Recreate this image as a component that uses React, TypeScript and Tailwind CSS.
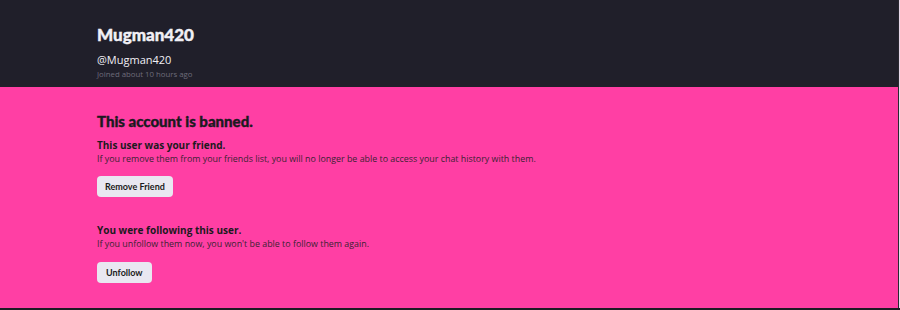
export default function App() {
  return (
    <div className="w-[900px] h-[310px] overflow-hidden flex flex-col bg-[#ff3fa4]" style={{ fontFamily: "Lato, 'Noto Sans', sans-serif" }}>
      <div className="flex flex-1 min-h-0">
        <div className="flex-1 flex flex-col min-w-0">
          <div className="h-[87px] bg-[#201f2a] pl-[97px] pt-[24px] shrink-0">
            <div className="text-[17px] leading-[22px] font-black text-[#f1f0f5] [-webkit-text-stroke:0.4px_#f1f0f5]">Mugman420</div>
            <div className="mt-[7px] text-[11px] leading-[14px] text-[#f1f0f5] font-['Open_Sans',sans-serif]">@Mugman420</div>
            <div className="mt-[1px] text-[7.8px] leading-[12px] text-[#6e6c7a] font-['Open_Sans',sans-serif]">Joined about 10 hours ago</div>
          </div>
          <div className="flex-1 pl-[97px] pt-[24px] text-[#1b1a20]">
            <div className="text-[15px] leading-[20px] font-black [-webkit-text-stroke:0.35px_#1b1a20]">This account is banned.</div>
            <div className="mt-[8px] text-[10px] leading-[12px] font-bold font-['Open_Sans',sans-serif]">This user was your friend.</div>
            <div className="mt-[1px] text-[8.9px] leading-[14px] text-[#3b2233] font-['Open_Sans',sans-serif]">If you remove them from your friends list, you will no longer be able to access your chat history with them.</div>
            <button className="mt-[10px] h-[21px] px-[8px] rounded-[4px] bg-[#e9e7f1] text-[9px] font-bold text-[#1b1a20]">Remove Friend</button>
            <div className="mt-[27px] text-[10px] leading-[12px] font-bold font-['Open_Sans',sans-serif]">You were following this user.</div>
            <div className="mt-[1px] text-[8.9px] leading-[14px] text-[#3b2233] font-['Open_Sans',sans-serif]">If you unfollow them now, you won't be able to follow them again.</div>
            <button className="mt-[11px] h-[21px] px-[9px] rounded-[4px] bg-[#e9e7f1] text-[9px] font-bold text-[#1b1a20]">Unfollow</button>
          </div>
        </div>
        <div className="w-[1px] bg-[#2a2830]" />
        <div className="w-[1px] bg-[#e6d8ea]" />
      </div>
      <div className="h-[2px] bg-[#1d1c22] shrink-0" />
    </div>
  );
}
